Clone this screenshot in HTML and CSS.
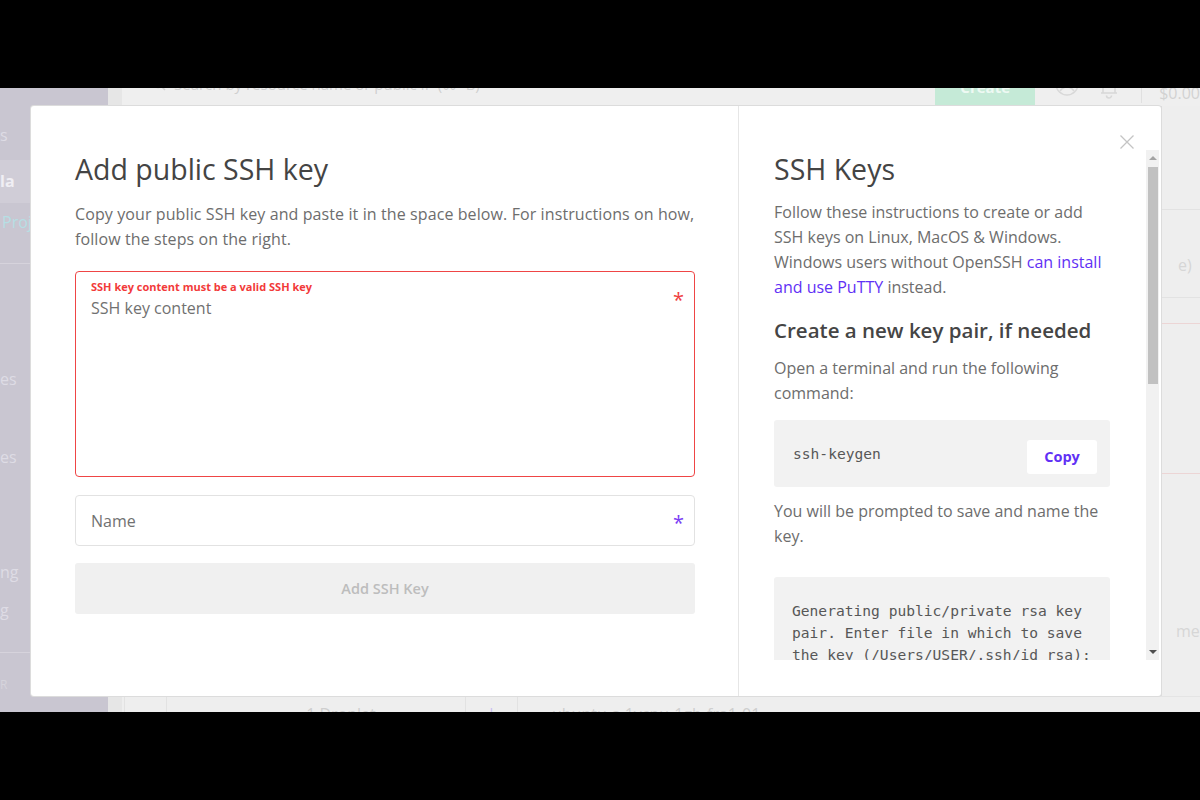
FILE: index.html
```html
<!DOCTYPE html>
<html lang="en">
<head>
<meta charset="utf-8">
<title>Add public SSH key</title>
<link rel="stylesheet" href="styles.css">
</head>
<body>
<div class="frame-bar"></div>
<div class="app">
  <aside class="sidebar">
    <div class="sb-item sb-s">s</div>
    <div class="sb-item sb-active">la</div>
    <div class="sb-item sb-proj">Proj</div>
    <div class="sb-divider sb-div1"></div>
    <div class="sb-item sb-es1">es</div>
    <div class="sb-item sb-es2">es</div>
    <div class="sb-item sb-ng">ng</div>
    <div class="sb-item sb-g">g</div>
    <div class="sb-divider sb-div2"></div>
    <div class="sb-item sb-r">R</div>
  </aside>
  <main class="main">
    <div class="topbar">
      <div class="search">
        <svg class="search-icon" width="14" height="14" viewBox="0 0 14 14"><circle cx="6" cy="6" r="4.5" fill="none" stroke="#d2d2d2" stroke-width="1.5"/><path d="M9.5 9.5 13 13" stroke="#d2d2d2" stroke-width="1.5"/></svg>
        <span>Search by resource name or public IP (⌘+B)</span>
      </div>
      <div class="create-btn">Create</div>
      <svg class="top-icon icon-user" width="26" height="26" viewBox="0 0 26 26"><circle cx="13" cy="13" r="11" fill="none" stroke="#d8d8d8" stroke-width="1.5"/><path d="M6 20c2-3 4.5-4 7-4s5 1 7 4" fill="none" stroke="#d8d8d8" stroke-width="1.5"/></svg>
      <svg class="top-icon icon-bell" width="26" height="26" viewBox="0 0 26 26"><path d="M5 19h16M7 19V12a6 6 0 0 1 12 0v7" fill="none" stroke="#d8d8d8" stroke-width="1.5"/><path d="M10.5 21.5a2.5 2.5 0 0 0 5 0" fill="none" stroke="#d8d8d8" stroke-width="1.5"/></svg>
      <div class="top-divider"></div>
      <div class="balance">$0.00</div>
    </div>
    <div class="content">
      <div class="content-main"></div>
      <div class="content-side">
        <div class="side-block sb1"></div>
        <div class="side-block sb2">e)</div>
        <div class="side-block sb3"></div>
        <div class="side-block sb4"></div>
        <div class="side-block sb5">me ca</div>
      </div>
    </div>
    <div class="table-row">
      <div class="cell c1"></div>
      <div class="cell c2"></div>
      <div class="cell c3">1 Droplet</div>
      <div class="cell c4"><span class="bar-mark">|</span></div>
      <div class="cell c5">ubuntu-s-1vcpu-1gb-fra1-01</div>
    </div>
  </main>

  <div class="modal">
    <section class="modal-left">
      <h1 class="title">Add public SSH key</h1>
      <p class="lead">Copy your public SSH key and paste it in the space below. For instructions on how, follow the steps on the right.</p>
      <div class="field field-area">
        <div class="field-body">
          <div class="field-error-msg">SSH key content must be a valid SSH key</div>
          <div class="field-placeholder">SSH key content</div>
        </div>
        <span class="req req-red">*</span>
      </div>
      <div class="field field-name">
        <div class="field-body">
          <div class="field-placeholder">Name</div>
        </div>
        <span class="req req-purple">*</span>
      </div>
      <button class="btn-add" type="button">Add SSH Key</button>
    </section>
    <section class="modal-right">
      <div class="guide">
        <div class="guide-content">
          <h2 class="title">SSH Keys</h2>
          <p class="text p-intro">Follow these instructions to create or add SSH keys on Linux, MacOS &amp; Windows. Windows users without OpenSSH <a class="link" href="#">can install and use PuTTY</a> instead.</p>
          <h3 class="subtitle">Create a new key pair, if needed</h3>
          <p class="text p-open">Open a terminal and run the following command:</p>
          <div class="code code-cmd">
            <span class="code-text">ssh-keygen</span>
            <button class="copy-btn" type="button">Copy</button>
          </div>
          <p class="text p-prompt">You will be prompted to save and name the key.</p>
          <pre class="code code-out">Generating public/private rsa key pair. Enter file in which to save the key (/Users/USER/.ssh/id_rsa):</pre>
        </div>
        <div class="scrollbar">
          <div class="sc-btn"><span class="arrow-up"></span></div>
          <div class="sc-thumb"></div>
          <div class="sc-track"></div>
          <div class="sc-btn"><span class="arrow-down"></span></div>
        </div>
      </div>
    </section>
    <button class="close" type="button" aria-label="Close">
      <svg width="14" height="14" viewBox="0 0 14 14"><path d="M0.5 0.5 13.5 13.5M13.5 0.5 0.5 13.5" stroke="#c4c4c4" stroke-width="1.3"/></svg>
    </button>
  </div>
</div>
<div class="frame-bar"></div>
</body>
</html>
```
FILE: styles.css
```css
* { box-sizing: border-box; }
body {
  margin: 0;
  background: #000;
  font-family: "Open Sans", "Noto Sans", sans-serif;
}
.frame-bar { height: 88px; background: #000; }
.app {
  height: 624px;
  position: relative;
  display: flex;
  overflow: hidden;
  background: #eeeeee;
}

/* sidebar (dimmed) */
.sidebar {
  width: 108px;
  flex-shrink: 0;
  background: #c9c6d1;
  display: flex;
  flex-direction: column;
  color: #dedce5;
  font-size: 16px;
}
.sb-item { height: 30px; line-height: 30px; white-space: nowrap; }
.sb-s { margin-top: 32px; }
.sb-active { margin-top: 10px; height: 43px; line-height: 43px; background: #d0cdd7; color: #f0eff4; font-weight: 700; }
.sb-proj { margin-top: 4px; color: #b6dfe4; padding-left: 2px; }
.sb-divider { height: 1px; background: #d6d3dc; }
.sb-div1 { margin-top: 26px; }
.sb-es1 { margin-top: 100px; }
.sb-es2 { margin-top: 48px; }
.sb-ng { margin-top: 85px; }
.sb-g { margin-top: 8px; }
.sb-div2 { margin-top: 27px; }
.sb-r { margin-top: 22px; height: 20px; line-height: 20px; font-size: 12px; color: #d6d4dc; }

/* main (dimmed) */
.main {
  flex: 1;
  display: flex;
  flex-direction: column;
  background: #e6e6e6;
  padding-left: 14px;
  min-width: 0;
}
.topbar {
  height: 18px;
  flex-shrink: 0;
  display: flex;
  align-items: flex-start;
  overflow: hidden;
  background: #efefef;
  padding-left: 30px;
}
.search {
  flex: 1;
  display: flex;
  align-items: center;
  gap: 8px;
  margin-top: -14px;
  height: 20px;
  color: #d0d0d0;
  font-size: 15px;
  white-space: nowrap;
}
.create-btn {
  width: 100px;
  height: 36px;
  margin-top: -19px;
  background: #c5ead7;
  color: #eef9f3;
  font-weight: 700;
  font-size: 15px;
  text-align: center;
  line-height: 36px;
}
.top-icon { flex-shrink: 0; margin-top: -17px; }
.icon-user { margin-left: 19px; }
.icon-bell { margin-left: 16px; margin-top: -14px; }
.top-divider { width: 1px; height: 15px; background: #e0e0e0; margin-left: 19px; }
.balance { margin-left: 17px; margin-top: -5px; font-size: 16px; line-height: 20px; color: #d2d2d2; white-space: nowrap; }

.content {
  height: 590px;
  flex-shrink: 0;
  display: flex;
  background: #eeeeee;
}
.content-main { flex: 1; }
.content-side {
  width: 39px;
  flex-shrink: 0;
  border-left: 1px solid #dddddd;
  overflow: hidden;
  white-space: nowrap;
  color: #d6d6d6;
  font-size: 16px;
  line-height: 20px;
}
.sb1 { height: 104px; border-bottom: 1px solid #e2e2e2; }
.sb2 { height: 88px; border-bottom: 1px solid #e2e2e2; padding: 45px 0 0 16px; }
.sb3 { height: 26px; border-bottom: 1px solid #ecd5d5; }
.sb4 { height: 150px; border-bottom: 1px solid #ecd5d5; }
.sb5 { padding: 147px 0 0 14px; }

.table-row {
  height: 30px;
  flex-shrink: 0;
  display: flex;
  background: #eeeeee;
  border-top: 1px solid #e4e4e4;
  color: #cfcfcf;
  font-size: 16px;
  line-height: 20px;
  white-space: nowrap;
}
.cell { border-left: 1px solid #e2e2e2; padding-top: 7px; }
.c1 { width: 2px; border-left: none; }
.c2 { width: 42px; }
.c3 { width: 299px; text-align: center; padding-left: 50px; }
.c4 { width: 52px; text-align: center; }
.c5 { flex: 1; padding-left: 34px; }
.bar-mark { color: #c9bdf2; }

/* modal */
.modal {
  position: absolute;
  left: 31px;
  top: 18px;
  width: 1130px;
  height: 590px;
  background: #ffffff;
  border-radius: 3px;
  box-shadow: 0 0 0 1px #dcdcdc;
  display: flex;
}
.modal-left {
  width: 708px;
  flex-shrink: 0;
  padding: 46px 43px 0 44px;
  border-right: 1px solid #e6e6e6;
}
.title {
  margin: 0;
  font-size: 28.5px;
  line-height: 34px;
  font-weight: 400;
  color: #444444;
  white-space: nowrap;
}
.lead {
  margin: 16px -8px 0 0;
  font-size: 16px;
  line-height: 25px;
  color: #6d6d6d;
  letter-spacing: 0.1px;
}
.field {
  display: flex;
  border: 1px solid #e2e2e2;
  border-radius: 4px;
  padding: 0 10px 0 15px;
}
.field-body { flex: 1; }
.field-area {
  margin-top: 19px;
  height: 206px;
  border-color: #ef4545;
  padding-top: 8px;
}
.field-error-msg {
  font-size: 11px;
  line-height: 14px;
  font-weight: 700;
  color: #f23a3a;
  white-space: nowrap;
}
.field-placeholder {
  font-size: 16px;
  line-height: 20px;
  color: #717171;
}
.field-area .field-placeholder { margin-top: 4px; }
.req { font-size: 20px; line-height: 20px; }
.req-red { color: #ef4040; margin-top: 10px; }
.field-name {
  margin-top: 18px;
  height: 51px;
  align-items: center;
}
.req-purple { color: #7a3cf4; padding-top: 5px; }
.btn-add {
  margin-top: 17px;
  display: block;
  width: 100%;
  height: 51px;
  border: none;
  border-radius: 3px;
  background: #f0f0f0;
  color: #bdbdbd;
  font-family: inherit;
  font-size: 14.5px;
  font-weight: 600;
}

.modal-right {
  flex: 1;
  padding: 44px 2px 36px 0;
  min-width: 0;
}
.guide {
  height: 100%;
  display: flex;
}
.guide-content {
  flex: 1;
  overflow: hidden;
  padding: 2px 36px 0 35px;
}
.text {
  margin: 0 -6px 0 0;
  font-size: 16px;
  line-height: 25px;
  color: #6d6d6d;
}
.p-intro { margin-top: 14px; }
.link { color: #6130f5; text-decoration: none; }
.subtitle {
  margin: 16px 0 0;
  font-size: 20.5px;
  line-height: 28px;
  font-weight: 600;
  color: #454545;
  white-space: nowrap;
}
.p-open { margin-top: 12px; }
.code {
  background: #f2f2f2;
  border-radius: 3px;
  font-family: "DejaVu Sans Mono", monospace;
  font-size: 14.6px;
  color: #575757;
}
.code-cmd {
  margin-top: 14px;
  height: 67px;
  display: flex;
  align-items: center;
  padding: 0 13px 0 19px;
}
.code-text { flex: 1; }
.copy-btn {
  width: 70px;
  height: 34px;
  margin-top: 6px;
  border: none;
  border-radius: 3px;
  background: #ffffff;
  color: #6130f5;
  font-family: "Open Sans", sans-serif;
  font-size: 14.5px;
  font-weight: 700;
  line-height: 30px;
}
.p-prompt { margin-top: 12px; }
.code-out {
  margin: 28px 0 0;
  padding: 23px 18px;
  white-space: pre-wrap;
  line-height: 22px;
}

.scrollbar {
  width: 13px;
  flex-shrink: 0;
  display: flex;
  flex-direction: column;
  background: #f1f1f1;
}
.sc-btn {
  height: 16px;
  display: flex;
  align-items: center;
  justify-content: center;
}
.arrow-up, .arrow-down {
  width: 0;
  height: 0;
  border-left: 4px solid transparent;
  border-right: 4px solid transparent;
}
.arrow-up { border-bottom: 4px solid #a3a3a3; }
.arrow-down { border-top: 4px solid #505050; }
.sc-thumb {
  margin: 1px 1px 0 2px;
  height: 217px;
  background: #c1c1c1;
}
.sc-track { flex: 1; }

.close {
  position: absolute;
  top: 29px;
  right: 27px;
  padding: 0;
  border: none;
  background: transparent;
  width: 14px;
  height: 14px;
  display: flex;
}
```
